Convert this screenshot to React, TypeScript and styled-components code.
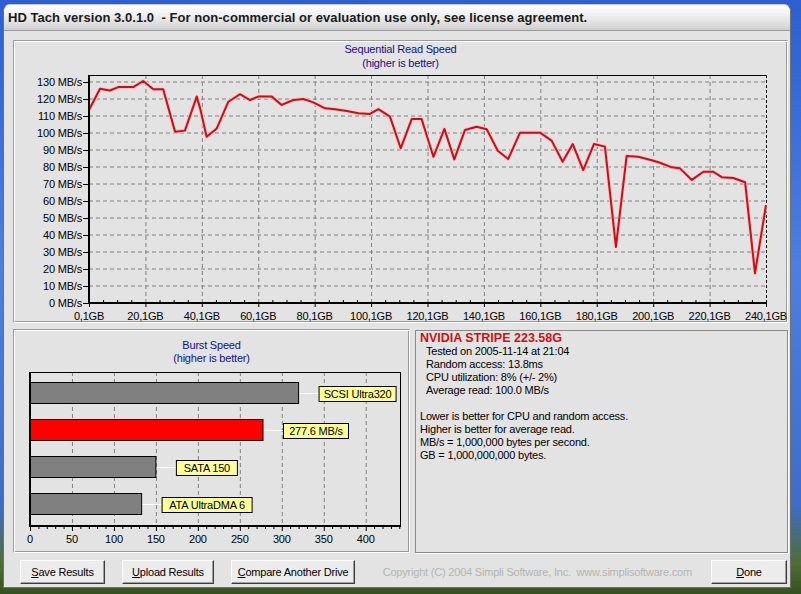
import React from "react";
import styled, { createGlobalStyle } from "styled-components";

// sequential read samples: [position in GB, speed in MB/s]
const readData: [number, number][] = [
  [0, 113.5], [3.9, 126], [7.4, 125], [10.4, 127], [15.7, 127], [19.2, 130.6],
  [22.8, 125.7], [26.3, 125.7], [30.5, 100.8], [34, 101.4], [38.2, 121.4],
  [39.4, 114.5], [41.7, 97.8], [45.3, 102.7], [49.4, 118.4], [53.5, 122.8],
  [57.1, 119.4], [60, 121.4], [64.8, 121.4], [68.3, 116.5], [72.4, 119.4],
  [76, 120], [79.5, 118], [83.7, 114.5], [87.2, 114], [91.4, 113], [95.5, 111.6],
  [99.6, 111.2], [102.6, 114], [106.7, 109.6], [110.5, 91], [114.4, 108.2],
  [117.9, 108.2], [122.1, 86], [126, 102.4], [129.5, 84.5], [133.3, 101.8],
  [137.4, 103.7], [141, 102.2], [144.9, 89.6], [148.6, 84.7], [152.8, 100.2],
  [159.9, 100.2], [164, 95.5], [167.9, 83.1], [171.5, 93.5], [175.2, 78.2],
  [179, 93.5], [182.9, 92], [186.8, 33], [190.6, 86.5], [194.7, 86], [199.5, 84],
  [202.4, 82.5], [206.6, 79.8], [209.5, 79.2], [213.7, 72.4], [217.8, 77.2],
  [221.3, 77.2], [224.3, 74], [228.4, 73.5], [232.6, 71], [236.1, 17.5], [240, 57.6],
];

const bursts = [
  { label: "SCSI Ultra320", speed: 320, labelW: 77, mine: false },
  { label: "277.6 MB/s", speed: 277.6, labelW: 65, mine: true },
  { label: "SATA 150", speed: 150, labelW: 61, mine: false },
  { label: "ATA UltraDMA 6", speed: 133, labelW: 90, mine: false },
];

const infoLines = [
  " Tested on 2005-11-14 at 21:04",
  " Random access: 13.8ms",
  " CPU utilization: 8% (+/- 2%)",
  " Average read: 100.0 MB/s",
  "",
  "Lower is better for CPU and random access.",
  "Higher is better for average read.",
  "MB/s = 1,000,000 bytes per second.",
  "GB = 1,000,000,000 bytes.",
];

// read chart geometry (page pixels)
const X0 = 89;
const X1 = 766;
const Y0 = 303;
const YTOP = 75;
const gx = (gb: number) => X0 + (gb / 240) * (X1 - X0);
const gy = (v: number) => Y0 - v * 1.7;

// burst chart geometry
const BX0 = 30;
const BX1 = 400;
const BY0 = 372;
const BY1 = 526;
const bx = (v: number) => BX0 + v * 0.8393;

const range = (n: number) => Array.from({ length: n }, (_, i) => i);

const ReadChart = () => {
  const points = readData.map(([g, v]) => `${gx(g)},${gy(v)}`).join(" ");
  return (
    <ChartSvg width={773} height={252} viewBox="14 70 773 252">
      {range(13).map((i) => (
        <line key={"h" + i} x1={X0} x2={X1} y1={gy((i + 1) * 10)} y2={gy((i + 1) * 10)}
          stroke="#808080" strokeDasharray="4 3" />
      ))}
      {range(11).map((i) => (
        <line key={"v" + i} x1={gx((i + 1) * 20) + 0.5} x2={gx((i + 1) * 20) + 0.5} y1={YTOP} y2={Y0}
          stroke="#808080" strokeDasharray="4 3" />
      ))}
      <line x1={X0} x2={X1} y1={YTOP + 0.5} y2={YTOP + 0.5} stroke="#000" />
      <line x1={X1 + 0.5} x2={X1 + 0.5} y1={YTOP} y2={Y0} stroke="#000" strokeDasharray="3 2" />
      {range(49).map((i) => (
        <line key={"t" + i} x1={gx(i * 5) + 0.5} x2={gx(i * 5) + 0.5}
          y1={i % 4 === 0 ? Y0 + 4 : Y0 - 3} y2={Y0} stroke="#000" />
      ))}
      {range(14).map((i) => (
        <g key={"y" + i}>
          <line x1={83} x2={X0} y1={gy(i * 10) + 0.5} y2={gy(i * 10) + 0.5} stroke="#000" />
          <AxisText x={82} y={gy(i * 10) + 4} textAnchor="end">{i * 10} MB/s</AxisText>
        </g>
      ))}
      {range(13).map((i) => (
        <AxisText key={"x" + i} x={gx(i * 20)} y={319.5} textAnchor="middle">{i * 20},1GB</AxisText>
      ))}
      <polyline points={points} fill="none" stroke="#f2c4c4" strokeWidth={3.6} strokeLinejoin="round" />
      <polyline points={points} fill="none" stroke="#c8101a" strokeWidth={2} strokeLinejoin="round" />
      <line x1={X0} x2={X0} y1={YTOP} y2={Y0 + 1} stroke="#000" strokeWidth={2} />
      <line x1={X0 - 1} x2={X1} y1={Y0} y2={Y0} stroke="#000" strokeWidth={2} />
    </ChartSvg>
  );
};

const BurstChart = () => (
  <ChartSvg width={395} height={187} viewBox="14 365 395 187">
    {range(8).map((i) => (
      <line key={"v" + i} x1={bx((i + 1) * 50) + 0.5} x2={bx((i + 1) * 50) + 0.5} y1={BY0} y2={BY1}
        stroke="#808080" strokeDasharray="4 3" />
    ))}
    <rect x={BX0} y={BY0 + 0.5} width={BX1 - BX0 + 0.5} height={BY1 - BY0} fill="none" stroke="#000" />
    {range(45).map((i) => (
      <line key={"t" + i} x1={bx(i * 10) + 0.5} x2={bx(i * 10) + 0.5}
        y1={BY1} y2={i % 5 === 0 ? BY1 + 5 : BY1 + 3} stroke="#000" />
    ))}
    {range(9).map((i) => (
      <AxisText key={"x" + i} x={bx(i * 50)} y={543} textAnchor="middle">{i * 50}</AxisText>
    ))}
    {bursts.map((b, i) => {
      const top = 382 + i * 37;
      const end = bx(b.speed);
      return (
        <g key={b.label}>
          <rect x={BX0} y={top + 0.5} width={end - BX0} height={21} fill={b.mine ? "#ff0000" : "#808080"} stroke="#000" />
          <line x1={end + 1} x2={end + 20} y1={top + 11.5} y2={top + 11.5} stroke="#fff" />
          <rect x={end + 20.5} y={top + 4.5} width={b.labelW} height={15} fill="#ffff99" stroke="#000" />
          <AxisText x={end + 20.5 + b.labelW / 2} y={top + 16} textAnchor="middle">{b.label}</AxisText>
        </g>
      );
    })}
    <line x1={BX0} x2={BX0} y1={BY0} y2={BY1 + 1} stroke="#000" strokeWidth={2} />
    <line x1={BX0 - 1} x2={BX1 + 1} y1={BY1} y2={BY1} stroke="#000" strokeWidth={2} />
  </ChartSvg>
);

const App = () => {
  return (
    <>
      <GlobalStyle />
      <Window>
        <TitleBar>HD Tach version 3.0.1.0&nbsp; - For non-commercial or evaluation use only, see license agreement.</TitleBar>
        <Content>
          <Etched $h={283}>
            <ChartTitle>
              Sequential Read Speed
              <br />
              (higher is better)
            </ChartTitle>
            <ReadChart />
          </Etched>
          <BottomRow>
            <Etched $h={224} $pad={9}>
              <ChartTitle $lh={13}>
                Burst Speed
                <br />
                (higher is better)
              </ChartTitle>
              <BurstChart />
            </Etched>
            <InfoPanel>
              <InfoTitle>NVIDIA STRIPE 223.58G</InfoTitle>
              {infoLines.map((line, i) => (
                <InfoLine key={i} $indent={line.startsWith(" ")}>
                  {line.trim() || "\u00a0"}
                </InfoLine>
              ))}
            </InfoPanel>
          </BottomRow>
        </Content>
        <ButtonRow>
          <Button $w={85}><u>S</u>ave Results</Button>
          <Button $w={92}><u>U</u>pload Results</Button>
          <Button $w={124}><u>C</u>ompare Another Drive</Button>
          <Copyright>Copyright (C) 2004 Simpli Software, Inc.&nbsp; www.simplisoftware.com</Copyright>
          <Button $w={76}><u>D</u>one</Button>
        </ButtonRow>
      </Window>
    </>
  );
};

const GlobalStyle = createGlobalStyle`
  html, body {
    margin: 0;
    padding: 0;
    height: 100%;
    overflow: hidden;
  }
  body {
    background: linear-gradient(to bottom, #2d5fd0 0%, #4d7fe0 45%, #3f6cc8 85%, #4f6e33 95%, #34501f 100%);
    font-family: "Liberation Sans", Arial, sans-serif;
  }
  #root {
    padding-top: 4px;
  }
`;

const Window = styled.div`
  margin-left: 3px;
  width: 788px;
  height: 584px;
  box-sizing: border-box;
  background: #e3e3e3;
  border: 1px solid #6f6f6f;
  border-top-color: #c8c8c8;
  border-radius: 7px 7px 0 0;
  display: flex;
  flex-direction: column;
  overflow: hidden;
`;

const TitleBar = styled.div`
  height: 24px;
  line-height: 24px;
  padding: 1px 0 0 4px;
  font-size: 13px;
  font-weight: bold;
  letter-spacing: 0.05px;
  color: #1a1a1a;
  white-space: nowrap;
  background: linear-gradient(to bottom, #ffffff 0%, #f2f2f2 35%, #dedede 75%, #cfcfcf 100%);
  border-bottom: 1px solid #9a9a9a;
`;

const Content = styled.div`
  padding: 9px 2px 0 9px;
  display: flex;
  flex-direction: column;
  gap: 6px;
`;

const Etched = styled.div<{ $h: number; $pad?: number }>`
  height: ${(p) => p.$h}px;
  box-sizing: border-box;
  padding-top: ${(p) => p.$pad ?? 1}px;
  border: 1px solid;
  border-color: #9b9b9b #ffffff #ffffff #9b9b9b;
  box-shadow: inset 1px 1px #ffffff, inset -1px -1px #9b9b9b;
  overflow: hidden;
`;

const ChartTitle = styled.div<{ $lh?: number }>`
  text-align: center;
  font-size: 11px;
  letter-spacing: -0.2px;
  line-height: ${(p) => p.$lh ?? 14}px;
  color: #10108a;
`;

const ChartSvg = styled.svg`
  display: block;
  overflow: visible;
`;

const AxisText = styled.text`
  font-family: "Liberation Sans", Arial, sans-serif;
  font-size: 11px;
  letter-spacing: -0.2px;
  fill: #000;
`;

const BottomRow = styled.div`
  display: grid;
  grid-template-columns: 397px 373px;
  column-gap: 5px;
`;

const InfoPanel = styled.div`
  margin-top: 1px;
  height: 223px;
  box-sizing: border-box;
  padding: 1px 4px;
  border: 1px solid #8a8a8a;
  box-shadow: 1px 1px #ffffff;
  font-size: 11px;
  letter-spacing: -0.2px;
  line-height: 13px;
  color: #000;
`;

const InfoTitle = styled.div`
  font-size: 12.5px;
  font-weight: bold;
  letter-spacing: 0;
  color: #cc1111;
`;

const InfoLine = styled.div<{ $indent: boolean }>`
  padding-left: ${(p) => (p.$indent ? 6 : 0)}px;
  white-space: nowrap;
`;

const ButtonRow = styled.div`
  height: 34px;
  box-sizing: border-box;
  padding: 7px 3px 0 16px;
  display: flex;
  align-items: flex-start;
  gap: 17px;
`;

const Button = styled.div<{ $w: number }>`
  width: ${(p) => p.$w}px;
  height: 24px;
  box-sizing: border-box;
  line-height: 22px;
  text-align: center;
  font-size: 11px;
  letter-spacing: -0.2px;
  color: #000;
  background: #ececec;
  border: 1px solid;
  border-color: #ffffff #3c3c3c #3c3c3c #ffffff;
  box-shadow: inset -1px -1px #a0a0a0;
  white-space: nowrap;
`;

const Copyright = styled.div`
  flex: 1;
  text-align: right;
  padding-right: 2px;
  line-height: 24px;
  font-size: 11px;
  letter-spacing: -0.2px;
  color: #b4b4b4;
  white-space: nowrap;
`;

export default App;
